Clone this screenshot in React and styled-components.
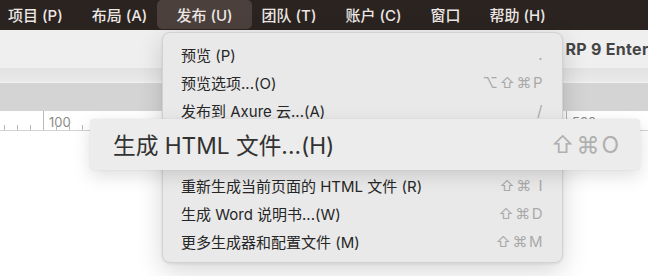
import React from "react";
import styled, { createGlobalStyle } from "styled-components";

const GlobalStyle = createGlobalStyle`
  html, body { margin: 0; padding: 0; background: #ffffff; overflow: hidden; }
  * { box-sizing: border-box; }
`;

const UI_FONT = `"Inter", "Noto Sans CJK SC", sans-serif`;
const KEY_FONT = `"Inter", "DejaVu Sans", "Noto Sans CJK SC", sans-serif`;

const Screen = styled.div`
  position: relative;
  width: 648px;
  height: 276px;
  overflow: hidden;
  font-family: ${UI_FONT};
  background: #ffffff;
`;

const MenuBar = styled.div`
  display: flex;
  align-items: flex-start;
  height: 30px;
  background: #2b2320;
`;

const MenuBarItem = styled.div`
  height: 29px;
  display: flex;
  align-items: center;
  padding: 0 ${(p) => (p.$active ? 19 : 14.5)}px;
  margin: 0 ${(p) => (p.$active ? -4.5 : 0)}px;
  border-radius: 5px;
  background: ${(p) => (p.$active ? "#4b403c" : "transparent")};
  color: #ece7e4;
  font-size: 15px;
  font-weight: 500;
  white-space: nowrap;
  &:first-child { padding-left: 8px; }
`;

const Window = styled.div`
  display: flex;
  flex-direction: column;
`;

const TitleBar = styled.div`
  height: 38px;
  background: #efefef;
  display: flex;
  align-items: center;
  padding-left: 513px;
  overflow: hidden;
`;

const Title = styled.div`
  font-size: 16px;
  font-weight: 700;
  letter-spacing: 0.3px;
  color: #454545;
  white-space: nowrap;
`;

const ToolbarEdge = styled.div`
  height: 15px;
  background: linear-gradient(#e2e2e2, #e9e9e9 85%, #f2f2f2);
`;

const Band = styled.div`
  height: 28px;
  background: #d4d4d4;
`;

const RulerBox = styled.div`
  height: 20px;
  background: #ffffff;
`;

const Canvas = styled.div`
  height: 145px;
  background: #ffffff;
`;

const DropMenu = styled.div`
  position: absolute;
  left: 162px;
  top: 32px;
  width: 401px;
  padding: 7px 0;
  background: #e9e9e9;
  border: 1px solid #d2d2d2;
  border-radius: 8px;
  box-shadow: 0 8px 26px rgba(0, 0, 0, 0.16), 0 1px 3px rgba(0, 0, 0, 0.08);
  display: flex;
  flex-direction: column;
`;

const MenuRow = styled.div`
  height: 28px;
  display: flex;
  align-items: center;
  justify-content: space-between;
  padding: 0 18px;
  font-size: 15px;
  color: #262626;
  white-space: nowrap;
  visibility: ${(p) => (p.$covered ? "hidden" : "visible")};
`;

const Shortcut = styled.span`
  font-family: ${KEY_FONT};
  font-size: ${(p) => p.$size || 15}px;
  color: ${(p) => p.$color || "#a9a9a9"};
  letter-spacing: ${(p) => p.$spacing || 1.5}px;
`;

const Separator = styled.div`
  height: 19px;
`;

const Magnifier = styled.div`
  position: absolute;
  left: 90px;
  top: 119px;
  width: 550px;
  height: 51px;
  background: #ececec;
  border-radius: 4px;
  box-shadow: 0 6px 18px rgba(0, 0, 0, 0.13), 0 0 2px rgba(0, 0, 0, 0.08);
  display: flex;
  align-items: center;
  justify-content: space-between;
  padding: 0 19px 0 23px;
`;

const MagnifiedLabel = styled.span`
  font-size: 22.7px;
  color: #323232;
  white-space: nowrap;
`;

const menuBarItems = ["项目 (P)", "布局 (A)", "发布 (U)", "团队 (T)", "账户 (C)", "窗口", "帮助 (H)"];

const menuItems = [
  { label: "预览 (P)", key: "." },
  { label: "预览选项...(O)", key: "⌥⇧⌘P" },
  { label: "发布到 Axure 云...(A)", key: "/" },
  { sep: true },
  { label: "生成 HTML 文件...(H)", key: "⇧⌘O", covered: true },
  { label: "重新生成当前页面的 HTML 文件 (R)", key: "⇧⌘ I" },
  { label: "生成 Word 说明书...(W)", key: "⇧⌘D" },
  { label: "更多生成器和配置文件 (M)", key: "⇧⌘M" },
];

function Ruler() {
  const scale = 1.307;
  const zero = 43 - 100 * scale;
  const ticks = [];
  for (let u = 0; u <= 500; u += 10) {
    const x = Math.round(zero + u * scale) + 0.5;
    if (x < 0 || x > 648) continue;
    const major = u % 100 === 0;
    ticks.push(
      <line key={u} x1={x} x2={x} y1={major ? 0 : 14} y2={19} stroke="#b9b9b9" strokeWidth="1" />
    );
    if (major) {
      ticks.push(
        <text key={"t" + u} x={x + 5.5} y={15.5} fontSize="13" fill="#8a8a8a" fontFamily="Inter, sans-serif">
          {u}
        </text>
      );
    }
  }
  return (
    <svg width="648" height="20" viewBox="0 0 648 20">
      {ticks}
      <line x1="0" x2="648" y1="19.5" y2="19.5" stroke="#d2d2d2" strokeWidth="1" />
    </svg>
  );
}

export default function App() {
  return (
    <>
      <GlobalStyle />
      <Screen>
        <MenuBar>
          {menuBarItems.map((t) => (
            <MenuBarItem key={t} $active={t === "发布 (U)"}>
              {t}
            </MenuBarItem>
          ))}
        </MenuBar>
        <Window>
          <TitleBar>
            <Title>Axure RP 9 Enterprise</Title>
          </TitleBar>
          <ToolbarEdge />
          <Band />
          <RulerBox>
            <Ruler />
          </RulerBox>
          <Canvas />
        </Window>
        <DropMenu>
          {menuItems.map((m, i) =>
            m.sep ? (
              <Separator key={i} />
            ) : (
              <MenuRow key={i} $covered={m.covered}>
                <span>{m.label}</span>
                <Shortcut>{m.key}</Shortcut>
              </MenuRow>
            )
          )}
        </DropMenu>
        <Magnifier>
          <MagnifiedLabel>生成 HTML 文件...(H)</MagnifiedLabel>
          <Shortcut $size={23} $color="#b0b0b0" $spacing={2}>⇧⌘O</Shortcut>
        </Magnifier>
      </Screen>
    </>
  );
}
